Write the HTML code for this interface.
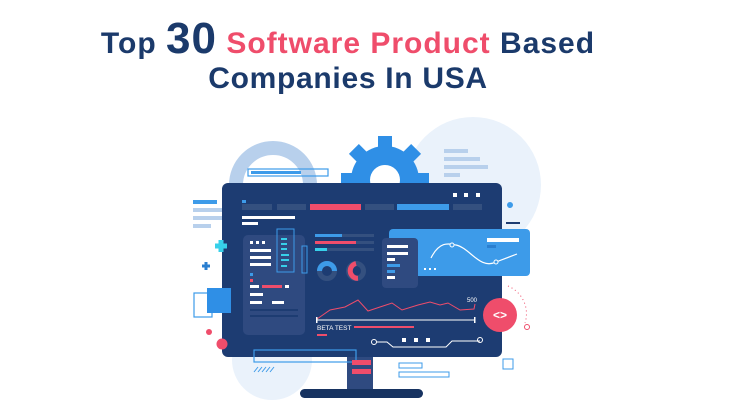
<!DOCTYPE html>
<html><head><meta charset="utf-8"><style>
html,body{margin:0;padding:0;background:#fff;width:730px;height:417px;overflow:hidden}
.t{position:absolute;left:-17px;width:730px;text-align:center;font-family:"Liberation Sans",sans-serif;font-weight:bold;color:#1b3a6b}
</style></head><body>
<div class="t" style="top:19px;font-size:30px;line-height:40px;letter-spacing:1px">Top <span style="font-size:44px">30</span> <span style="color:#ef4d6b">Software Product</span> Based</div>
<div class="t" style="top:59px;font-size:30px;line-height:40px;letter-spacing:0.7px">Companies In USA</div>
<svg width="730" height="417" style="position:absolute;left:0;top:0">
<circle cx="473" cy="185" r="68" fill="#eaf2fb"/>
<circle cx="272" cy="360" r="40" fill="#eaf2fb"/>
<path d="M236 185 A37 37 0 0 1 310 185" fill="none" stroke="#b8d0ec" stroke-width="14"/>
<g fill="#2f8fe6">
<circle cx="385" cy="180" r="34"/>
<g transform="translate(385 180)">
<rect x="-7" y="-44" width="14" height="14"/><rect x="-7" y="-44" width="14" height="14" transform="rotate(45)"/><rect x="-7" y="-44" width="14" height="14" transform="rotate(-45)"/><rect x="-7" y="-44" width="14" height="14" transform="rotate(90)"/><rect x="-7" y="-44" width="14" height="14" transform="rotate(-90)"/>
</g></g>
<circle cx="385" cy="180" r="15" fill="#fff"/>
<rect x="444" y="149" width="24" height="4" fill="#b8d0ec"/><rect x="444" y="157" width="36" height="4" fill="#b8d0ec"/><rect x="444" y="165" width="44" height="4" fill="#b8d0ec"/><rect x="444" y="173" width="16" height="4" fill="#b8d0ec"/>
<rect x="248" y="169" width="80" height="7" fill="none" stroke="#3d9be9" stroke-width="1.2"/><rect x="251" y="171" width="50" height="3" fill="#3d9be9"/>
<rect x="193" y="200" width="24" height="4" fill="#3d9be9"/><rect x="193" y="208" width="36" height="4" fill="#b8d0ec"/><rect x="193" y="216" width="45" height="4" fill="#b8d0ec"/><rect x="193" y="224" width="18" height="4" fill="#b8d0ec"/>
<rect x="347" y="355" width="26" height="34" fill="#2f4a80"/>
<rect x="300" y="389" width="123" height="9" rx="4.5" fill="#173361"/>
<rect x="222" y="183" width="280" height="174" rx="6" fill="#1d3c72"/>
<g fill="#fff"><rect x="453" y="193" width="4" height="4"/><rect x="464" y="193" width="4" height="4"/><rect x="476" y="193" width="4" height="4"/></g>
<rect x="242" y="200" width="4" height="3" fill="#3d9be9"/>
<rect x="242" y="204" width="30" height="6" fill="#34507f"/><rect x="277" y="204" width="29" height="6" fill="#34507f"/><rect x="310" y="204" width="51" height="6" fill="#ef4d6b"/><rect x="365" y="204" width="29" height="6" fill="#34507f"/><rect x="397" y="204" width="52" height="6" fill="#3d9be9"/><rect x="453" y="204" width="29" height="6" fill="#34507f"/>
<rect x="242" y="216" width="53" height="3" fill="#fff"/><rect x="242" y="222" width="16" height="3" fill="#fff"/>
<rect x="243" y="235" width="62" height="100" rx="5" fill="#2f4a80"/>
<g fill="#fff"><rect x="250" y="241" width="3" height="3"/><rect x="256" y="241" width="3" height="3"/><rect x="262" y="241" width="3" height="3"/>
<rect x="250" y="249" width="21" height="3"/><rect x="250" y="256" width="21" height="3"/><rect x="250" y="263" width="21" height="3"/>
<rect x="250" y="285" width="9" height="3"/><rect x="285" y="285" width="4" height="3"/><rect x="250" y="293" width="13" height="3"/><rect x="250" y="301" width="12" height="3"/><rect x="272" y="301" width="12" height="3"/></g>
<rect x="250" y="273" width="3" height="3" fill="#3d9be9"/><rect x="250" y="279" width="3" height="3" fill="#ef4d6b"/><rect x="262" y="285" width="20" height="3" fill="#ef4d6b"/>
<rect x="250" y="309" width="48" height="2" fill="#1d3c72"/><rect x="250" y="315" width="48" height="2" fill="#1d3c72"/>
<rect x="277" y="229" width="17" height="43" fill="none" stroke="#3d9be9" stroke-width="1"/><rect x="302" y="246" width="5" height="27" fill="none" stroke="#3d9be9" stroke-width="1"/>
<g fill="#37d0ea"><rect x="281" y="238" width="6" height="2"/><rect x="281" y="243" width="6" height="2"/><rect x="281" y="248" width="6" height="2"/><rect x="281" y="254" width="8" height="2"/><rect x="281" y="259" width="8" height="2"/><rect x="281" y="265" width="6" height="2"/></g>
<rect x="315" y="234" width="59" height="3" fill="#34507f"/><rect x="315" y="234" width="27" height="3" fill="#3d9be9"/>
<rect x="315" y="241" width="59" height="3" fill="#34507f"/><rect x="315" y="241" width="41" height="3" fill="#ef4d6b"/>
<rect x="315" y="248" width="59" height="3" fill="#34507f"/><rect x="315" y="248" width="12" height="3" fill="#37d0ea"/>
<circle cx="327" cy="271" r="7.5" fill="none" stroke="#34507f" stroke-width="5"/><path d="M319.5 271 A7.5 7.5 0 0 1 334.5 271" fill="none" stroke="#3d9be9" stroke-width="5"/>
<circle cx="356" cy="271" r="7.5" fill="none" stroke="#34507f" stroke-width="5"/><path d="M356 263.5 A7.5 7.5 0 0 0 358 278.3" fill="none" stroke="#ef4d6b" stroke-width="5"/>
<rect x="389" y="229" width="141" height="47" rx="4" fill="#3d9be9"/>
<rect x="382" y="238" width="36" height="50" rx="4" fill="#2f4a80"/>
<g fill="#fff"><rect x="387" y="245" width="21" height="3"/><rect x="387" y="252" width="21" height="3"/><rect x="387" y="258" width="8" height="3"/><rect x="387" y="276" width="8" height="3"/></g>
<rect x="387" y="264" width="13" height="3" fill="#3d9be9"/><rect x="387" y="270" width="8" height="3" fill="#3d9be9"/>
<path d="M431 258 C440 240,450 244,456 245 C470 248,480 270,496 262 L517 254" fill="none" stroke="#fff" stroke-width="1.2"/>
<circle cx="452" cy="245" r="2" fill="#3d9be9" stroke="#fff"/><circle cx="496" cy="262" r="2" fill="#3d9be9" stroke="#fff"/>
<rect x="487" y="238" width="32" height="4" fill="#fff"/><rect x="487" y="245" width="9" height="3" fill="#2a7fd0"/>
<g fill="#fff"><rect x="424" y="268" width="2" height="2"/><rect x="429" y="268" width="2" height="2"/><rect x="434" y="268" width="2" height="2"/></g>
<path d="M317 319 L330 310 L345 307 L358 300 L368 311 L380 307 L392 303 L402 310 L418 305 L430 302 L440 305 L448 303 L460 310 L474 309 L475 304" fill="none" stroke="#ef4d6b" stroke-width="1"/>
<path d="M317 320 L475 320" stroke="#fff" stroke-width="1"/><rect x="316" y="317" width="1.5" height="6" fill="#fff"/><rect x="474" y="317" width="1.5" height="6" fill="#fff"/>
<text x="467" y="302" font-family="Liberation Sans,sans-serif" font-size="6" fill="#fff">500</text>
<text x="317" y="330" font-family="Liberation Sans,sans-serif" font-size="6.5" fill="#fff">BETA TEST</text>
<rect x="317" y="334" width="10" height="2" fill="#ef4d6b"/><rect x="354" y="326" width="60" height="2" fill="#ef4d6b"/>
<path d="M376 342 L387 342 L393 347 L446 347 L452 341 L480 341" fill="none" stroke="#fff" stroke-width="1"/><circle cx="374" cy="342" r="2.5" fill="none" stroke="#fff"/><circle cx="480" cy="340" r="2.5" fill="none" stroke="#fff"/>
<g fill="#fff"><rect x="402" y="338" width="4" height="4"/><rect x="414" y="338" width="4" height="4"/><rect x="426" y="338" width="4" height="4"/></g>
<circle cx="500" cy="315" r="17" fill="#ef4d6b"/><text x="500" y="319" text-anchor="middle" font-family="Liberation Sans,sans-serif" font-weight="bold" font-size="12" fill="#fff">&lt;&gt;</text>
<circle cx="510" cy="205" r="3" fill="#3d9be9"/><rect x="506" y="222" width="14" height="2" fill="#1d3c72"/>
<path d="M508 286 A30 30 0 0 1 525 323" fill="none" stroke="#ef4d6b" stroke-width="1" stroke-dasharray="1 3"/><circle cx="527" cy="327" r="2.5" fill="none" stroke="#ef4d6b"/>
<rect x="254" y="350" width="102" height="12" fill="none" stroke="#3d9be9" stroke-width="1.2"/>
<rect x="352" y="360" width="19" height="5" fill="#ef4d6b"/><rect x="352" y="369" width="19" height="5" fill="#ef4d6b"/>
<rect x="399" y="363" width="23" height="5" fill="none" stroke="#3d9be9"/><rect x="399" y="372" width="50" height="5" fill="none" stroke="#3d9be9"/>
<rect x="503" y="359" width="10" height="10" fill="none" stroke="#3d9be9"/>
<path d="M254 372 l4 -5 M258 372 l4 -5 M262 372 l4 -5 M266 372 l4 -5 M270 372 l4 -5" stroke="#3d9be9" stroke-width="1"/>
<path d="M215 246 h12 M221 240 v12" stroke="#37d0ea" stroke-width="5"/>
<path d="M202 266 h8 M206 262 v8" stroke="#2a7fd0" stroke-width="3"/>
<rect x="194" y="293" width="18" height="24" fill="none" stroke="#3d9be9" stroke-width="1.2"/>
<rect x="207" y="288" width="24" height="25" fill="#2f8fe6"/>
<circle cx="209" cy="332" r="3" fill="#ef4d6b"/><circle cx="222" cy="344" r="5.5" fill="#ef4d6b"/>
</svg>
</body></html>
